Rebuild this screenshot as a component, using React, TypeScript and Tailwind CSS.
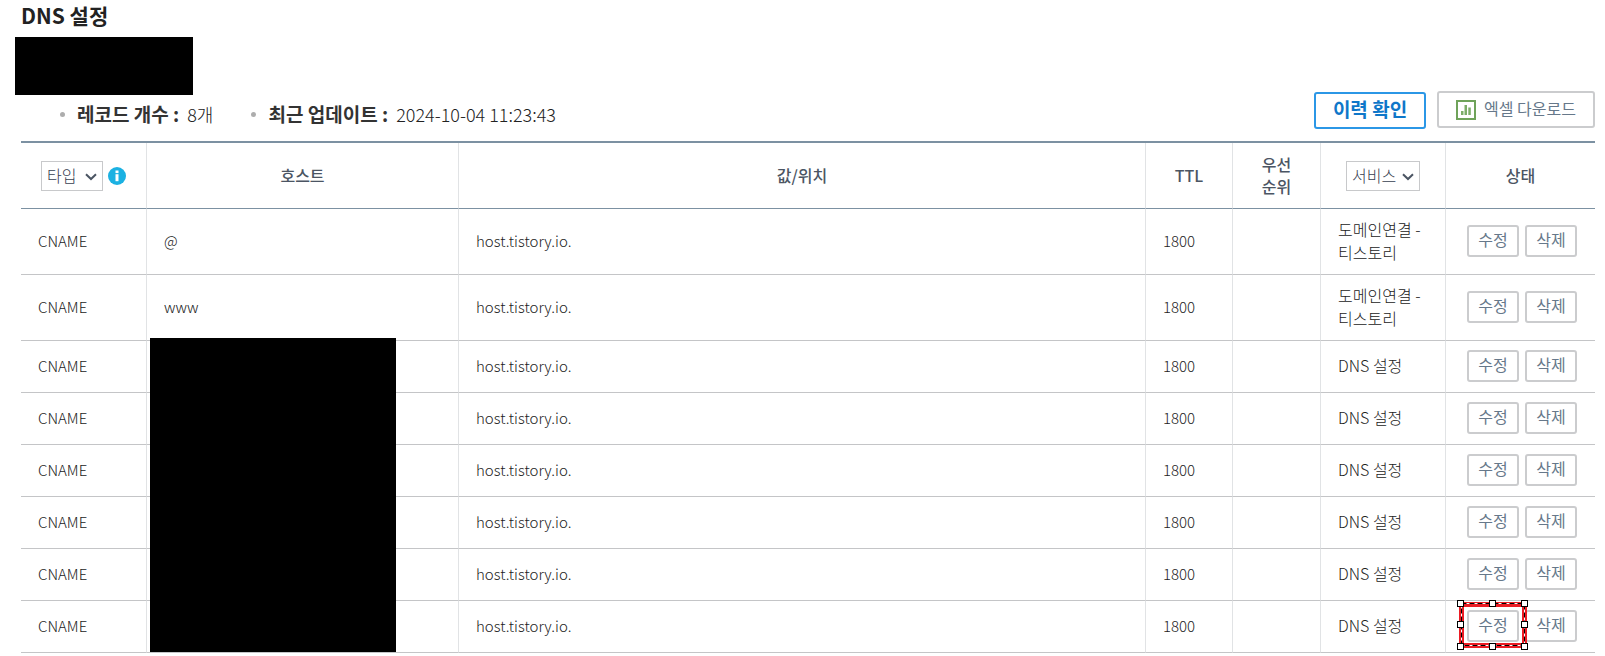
import type { ReactNode } from "react";

type DnsRecord = { type: string; host: string; value: string; ttl: number; service: string };

const LINKED = "도메인연결 - 티스토리";
const records: DnsRecord[] = [
  { type: "CNAME", host: "@", value: "host.tistory.io.", ttl: 1800, service: LINKED },
  { type: "CNAME", host: "www", value: "host.tistory.io.", ttl: 1800, service: LINKED },
  ...Array.from({ length: 6 }, () => ({
    type: "CNAME",
    host: "",
    value: "host.tistory.io.",
    ttl: 1800,
    service: "DNS 설정",
  })),
];

function FilterSelect({ label, width }: { label: string; width: string }) {
  return (
    <span className={`relative inline-flex ${width}`}>
      <select
        aria-label={label}
        className="h-[30px] w-full appearance-none border border-[#c8c9cb] bg-white pb-[2px] pl-[5px] text-[16px] leading-[26px] font-light text-[#374151] outline-none"
      >
        <option>{label}</option>
      </select>
      <svg
        viewBox="0 0 12 8"
        className="pointer-events-none absolute top-[12px] right-[6px] h-2 w-3"
        fill="none"
        stroke="#4b5563"
        strokeWidth="2"
      >
        <path d="M1 1.200 6 6l5-4.800" />
      </svg>
    </span>
  );
}

function InfoIcon() {
  return (
    <svg viewBox="0 0 18 18" className="h-[18px] w-[18px]">
      <circle cx="9" cy="9" r="9" fill="#1bb1e2" />
      <rect x="7.500" y="3.500" width="3" height="2.600" fill="#fff" />
      <rect x="7.500" y="7.200" width="3" height="7" fill="#fff" />
    </svg>
  );
}

function ChartIcon() {
  return (
    <svg viewBox="0 0 20 20" className="h-5 w-5">
      <rect x="1" y="1" width="18" height="18" fill="#fff" stroke="#6fa35a" strokeWidth="2" />
      <path d="M5 11h2.500v4H5zM8.500 5H11v10H8.500zM12.300 7.500h2.500V15h-2.500z" fill="#7cad68" />
    </svg>
  );
}

function Th({ children }: { children: ReactNode }) {
  return (
    <th
      scope="col"
      className="h-[66px] border-r border-b border-r-[#e1e3e5] border-b-[#7c91a2] px-4 pb-[2px] text-center font-medium text-[#4b5563] last:border-r-0"
    >
      {children}
    </th>
  );
}

function Td({ children }: { children?: ReactNode }) {
  return (
    <td className="relative border-r border-b border-r-[#e1e3e5] border-b-[#c4c5c7] px-[17px] pb-[2px] font-light last:border-r-0 last:pr-[17px] last:pl-[21px]">
      {children}
    </td>
  );
}

function RowButton({ children }: { children: ReactNode }) {
  return (
    <button
      type="button"
      className="flex h-8 w-[52px] shrink-0 items-center justify-center rounded-[3px] border-2 border-[#cbccce] bg-white pb-1 text-[16px] font-normal text-[#66788a]"
    >
      {children}
    </button>
  );
}

function SelectionFrame() {
  const xs = [4.5, 36.5, 68.5];
  const ys = [4.5, 25.5, 47.5];
  return (
    <svg viewBox="0 0 73 52" className="pointer-events-none absolute -top-[11px] -left-[11px] h-[52px] w-[73px]">
      <rect x="5.500" y="5.500" width="63" height="41" fill="none" stroke="#ec1c24" strokeWidth="5" />
      <rect x="5.500" y="4.500" width="63" height="42" fill="none" stroke="#fff" />
      <rect x="5.500" y="4.500" width="63" height="42" fill="none" stroke="#000" strokeDasharray="5 3" />
      {ys.flatMap((y) =>
        xs
          .filter((x) => x !== 36.5 || y !== 25.5)
          .map((x) => (
            <rect key={`${x}-${y}`} x={x - 3} y={y - 3} width="6" height="6" fill="#fff" stroke="#000" />
          )),
      )}
    </svg>
  );
}

function Stat({ label, value }: { label: string; value: string }) {
  return (
    <li className="flex items-center gap-3">
      <span className="h-[5px] w-[5px] rounded-full bg-[#adadad]" />
      <span className="flex items-baseline gap-2">
        <b className="text-[19px] font-bold text-[#333]">{label} :</b>
        <span className="font-light">{value}</span>
      </span>
    </li>
  );
}

export default function App() {
  return (
    <main className="bg-white pr-[10px] pl-[21px] font-['Noto_Sans_CJK_KR',sans-serif] text-[#222]">
      <h1 className="h-[37px] text-[21px] leading-[30px] font-bold">DNS 설정</h1>
      <div className="-ml-[6px] h-[58px] w-[178px] bg-black" />
      <div className="flex h-[46px] items-start justify-between">
        <ul className="flex gap-[38px] pt-[5px] pl-[39px] text-[18px] leading-[28px]">
          <Stat label="레코드 개수" value="8개" />
          <Stat label="최근 업데이트" value="2024-10-04 11:23:43" />
        </ul>
        <div className="-mt-1 flex gap-[11px]">
          <button
            type="button"
            className="mt-px h-[37px] w-28 rounded-[3px] border-2 border-[#2b97e6] bg-white pb-1 text-[19px] leading-[28px] font-bold text-[#0f77c9]"
          >
            이력 확인
          </button>
          <button
            type="button"
            className="flex h-[37px] w-[158px] items-center justify-center gap-2 rounded-[3px] border-2 border-[#cbccce] bg-white text-[16px] leading-[30px] text-[#66788a]"
          >
            <ChartIcon />
            <span className="pb-1">엑셀 다운로드</span>
          </button>
        </div>
      </div>
      <table className="w-full table-fixed border-separate border-spacing-0 border-t-2 border-t-[#7c91a2] text-[15px] leading-[22px]">
        <colgroup>
          <col className="w-[126px]" />
          <col className="w-[312px]" />
          <col />
          <col className="w-[87px]" />
          <col className="w-[88px]" />
          <col className="w-[125px]" />
          <col className="w-[149px]" />
        </colgroup>
        <thead className="text-[16px]">
          <tr>
            <Th>
              <div className="flex items-center justify-center gap-[5px] pt-[2px]">
                <FilterSelect label="타입" width="w-[62px]" />
                <InfoIcon />
              </div>
            </Th>
            <Th>호스트</Th>
            <Th>값/위치</Th>
            <Th>TTL</Th>
            <Th>
              우선
              <br />
              순위
            </Th>
            <Th>
              <div className="flex justify-center pt-[2px]">
                <FilterSelect label="서비스" width="w-[74px]" />
              </div>
            </Th>
            <Th>상태</Th>
          </tr>
        </thead>
        <tbody>
          {records.map((r, i) => (
            <tr key={i} className={r.service === LINKED ? "h-[66px]" : "h-[52px]"}>
              <Td>{r.type}</Td>
              <Td>
                {r.host}
                {i === 2 && <div className="absolute -top-[3px] left-[3px] z-10 h-[314px] w-[246px] bg-black" />}
              </Td>
              <Td>{r.value}</Td>
              <Td>{r.ttl}</Td>
              <Td />
              <Td>
                <span className="text-[16px]">{r.service}</span>
              </Td>
              <Td>
                <div className="relative flex gap-[6px]">
                  <RowButton>수정</RowButton>
                  <RowButton>삭제</RowButton>
                  {i === records.length - 1 && <SelectionFrame />}
                </div>
              </Td>
            </tr>
          ))}
        </tbody>
      </table>
    </main>
  );
}
